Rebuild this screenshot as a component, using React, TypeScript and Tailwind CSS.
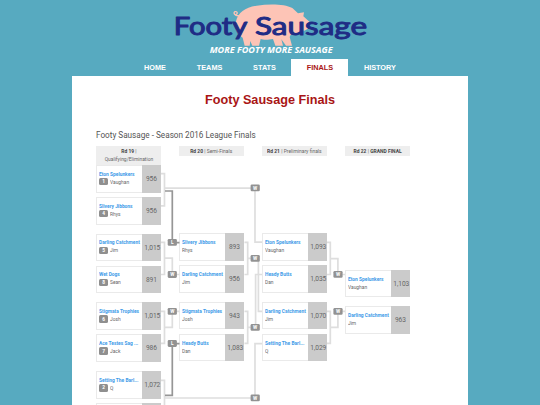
import { clsx } from 'clsx';

type Team = {
  name: string;
  owner: string;
  score: string;
  seed?: number;
};

type Round = {
  label: string;
  title: string;
  strong?: boolean;
  offset: string;
  pairs: (Team | null)[][];
};

const NAV = ['HOME', 'TEAMS', 'STATS', 'FINALS', 'HISTORY'];

const ROUNDS: Round[] = [
  {
    label: 'Rd 19',
    title: 'Qualifying/Elimination',
    offset: 'pt-0',
    pairs: [
      [
        { name: 'Eton Spelunkers', owner: 'Vaughan', score: '956', seed: 1 },
        { name: 'Slivery Jibbons', owner: 'Rhys', score: '956', seed: 4 },
      ],
      [
        { name: 'Darling Catchment', owner: 'Jim', score: '1,015', seed: 5 },
        { name: 'Wet Dogs', owner: 'Sean', score: '891', seed: 8 },
      ],
      [
        { name: 'Stigmata Trophies', owner: 'Josh', score: '1,015', seed: 6 },
        { name: 'Ace Testes Sag ...', owner: 'Jack', score: '986', seed: 7 },
      ],
      [{ name: 'Setting The Barl...', owner: 'Q', score: '1,072', seed: 2 }, null],
    ],
  },
  {
    label: 'Rd 20',
    title: 'Semi-Finals',
    offset: 'pt-[76.8px]',
    pairs: [
      [
        { name: 'Slivery Jibbons', owner: 'Rhys', score: '893' },
        { name: 'Darling Catchment', owner: 'Jim', score: '956' },
      ],
      [
        { name: 'Stigmata Trophies', owner: 'Josh', score: '943' },
        { name: 'Heady Butts', owner: 'Dan', score: '1,083' },
      ],
    ],
  },
  {
    label: 'Rd 21',
    title: 'Preliminary finals',
    offset: 'pt-[76.8px]',
    pairs: [
      [
        { name: 'Eton Spelunkers', owner: 'Vaughan', score: '1,093' },
        { name: 'Heady Butts', owner: 'Dan', score: '1,035' },
      ],
      [
        { name: 'Darling Catchment', owner: 'Jim', score: '1,070' },
        { name: 'Setting The Barl...', owner: 'Q', score: '1,029' },
      ],
    ],
  },
  {
    label: 'Rd 22',
    title: 'GRAND FINAL',
    strong: true,
    offset: 'pt-[113.4px]',
    pairs: [
      [{ name: 'Eton Spelunkers', owner: 'Vaughan', score: '1,103' }],
      [{ name: 'Darling Catchment', owner: 'Jim', score: '963' }],
    ],
  },
];

// Winner paths are light, loser paths dark
const WIN_LINES = [
  'M161 173.6H164.5V205.8H161',
  'M164.5 188.2H251',
  'M161 242.4H164.5V274.5H161',
  'M164.5 258.2H172.3V274.5H179.5',
  'M161 311.3H164.5V343.4H161',
  'M164.5 327.4H172.3V311.3H179.5',
  'M161 380.4H164.5V412H161',
  'M164.5 398H251',
  'M244.5 242.4H247.7V274.5H244.5',
  'M247.7 258.4H258.4V311.3H262',
  'M255 188V242.2H262',
  'M244.5 311.3H247.7V343.4H244.5',
  'M247.7 327.4H255.6V274.5H262',
  'M255 398V343.6H262',
  'M327 242.4H330.3V274.5H327',
  'M330.3 258.6H337.9V274.5H345',
  'M327 311.3H330.3V343.4H327',
  'M330.3 327.4H337.9V311.3H345',
];
const LOSE_LINES = ['M165 191H172.3V242.7H179.5', 'M165 395.4H172.3V343.6H179.5'];

const BADGES: [number, number, string][] = [
  [172.3, 242.4, 'L'],
  [172.3, 274.5, 'W'],
  [172.3, 311.3, 'W'],
  [172.3, 343.5, 'L'],
  [255.2, 187.8, 'W'],
  [255.2, 258.4, 'W'],
  [255.2, 327.4, 'W'],
  [255.2, 397.8, 'W'],
  [338, 274.4, 'W'],
  [338, 311.3, 'W'],
];

function Logo() {
  return (
    <svg className="h-[60px] w-[220px]" viewBox="0 0 660 180">
      <g fill="#fdc4b6">
        <path d="M228 64C234 38 256 22 290 17C330 11 374 12 397 24L414 40L432 37L430 49L440 58L449 66L446 84C434 94 414 99 392 104L389 111L396 137H378L364 118L369 137H346L339 117C320 121 308 119 302 117L297 137H277L271 123L269 137H254L248 113C231 102 224 84 228 64Z" />
        <path d="M237 47C225 49 218 38 225 35C232 33 235 42 226 45" fill="none" stroke="#fdc4b6" strokeWidth="4" />
      </g>
      <g
        className="fill-[#1f2c85] stroke-[#1f2c85] font-['Lato'] text-[73px]"
        strokeWidth="3"
        strokeLinejoin="round"
      >
        <text x="41" y="106" textLength="221" lengthAdjust="spacingAndGlyphs">
          Footy
        </text>
        <text x="285" y="106" textLength="336" lengthAdjust="spacingAndGlyphs">
          Sausage
        </text>
      </g>
      <text
        x="149"
        y="159"
        textLength="369"
        lengthAdjust="spacingAndGlyphs"
        className="fill-white font-['Open_Sans'] text-[25px] font-bold italic"
      >
        MORE FOOTY MORE SAUSAGE
      </text>
    </svg>
  );
}

function TeamBox({ team }: { team: Team | null }) {
  return (
    <div className="flex h-[27.5px] w-[64.6px] shrink-0 border border-[#eaeaea] bg-white">
      <div className="w-[45px] shrink-0 pt-[3.8px] pl-[1.8px] whitespace-nowrap">
        {team && (
          <>
            <div className="h-[8px] origin-left scale-x-[0.84] text-[5.8px] leading-[8px] font-bold text-[#419be8]">
              {team.name}
            </div>
            <div className="flex h-[8px] items-center gap-[2px]">
              {team.seed && (
                <span className="flex h-[7.4px] w-[9px] items-center justify-center rounded-[1.5px] bg-[#8f8f8f] text-[4.8px] font-bold text-white">
                  {team.seed}
                </span>
              )}
              <span className="origin-left scale-x-[0.84] text-[5.8px] leading-[8px] text-[#666]">{team.owner}</span>
            </div>
          </>
        )}
      </div>
      <div className="-my-px -mr-px flex w-[18.6px] shrink-0 items-center justify-center bg-[#cbcbcb] text-[7.7px] text-[#666]">
        {team && (
          <span className={clsx('scale-x-[0.86]', team.score.length > 3 && 'pl-[2px]')}>{team.score}</span>
        )}
      </div>
    </div>
  );
}

function RoundColumn({ round }: { round: Round }) {
  const wraps = round.title.length > 20;
  return (
    <div className="w-[64.6px] shrink-0">
      <div
        className={clsx(
          'flex justify-center bg-[#eee] text-center text-[5.7px] whitespace-nowrap text-[#666]',
          wraps ? 'h-[19px] pt-[1px] leading-[8px]' : 'h-[10.4px] leading-[10.4px]',
        )}
      >
        <div className="scale-x-[0.87]">
          <b className="text-[#444]">{round.label}</b> |{wraps ? <br /> : ' '}
          <span className={clsx(round.strong && 'font-bold text-[#444]')}>{round.title}</span>
        </div>
      </div>
      <div className={clsx('flex flex-col gap-[9.2px]', round.offset)}>
        {round.pairs.map((pair, i) => (
          <div key={i} className="flex flex-col gap-[4.5px]">
            {pair.map((team, j) => (
              <TeamBox key={j} team={team} />
            ))}
          </div>
        ))}
      </div>
    </div>
  );
}

function Connectors() {
  return (
    <svg className="absolute top-0 left-0 h-[259px] w-[314px]" viewBox="96 146 314 259">
      <path d={WIN_LINES.join('')} fill="none" stroke="#dedede" strokeWidth="1.7" />
      <path d={LOSE_LINES.join('')} fill="none" stroke="#969696" strokeWidth="1.7" />
      {BADGES.map(([x, y, label]) => (
        <g key={`${x}-${y}`}>
          <rect x={x - 4.6} y={y - 3.4} width="9.2" height="6.8" rx="1.3" fill="#929292" />
          <text x={x} y={y + 1.8} textAnchor="middle" className="fill-white text-[4.8px] font-bold">
            {label}
          </text>
        </g>
      ))}
    </svg>
  );
}

export default function App() {
  return (
    <div className="flex h-[405px] w-[540px] flex-col overflow-hidden bg-[#57aac0] font-['Liberation_Sans',sans-serif]">
      <header className="flex h-[59px] shrink-0 justify-center">
        <Logo />
      </header>
      <nav className="flex h-[17px] shrink-0 justify-center text-[7.3px] font-bold text-white">
        {NAV.map((item) => (
          <a
            key={item}
            href="#"
            className={clsx(
              'flex items-center px-[15.4px] pt-px',
              item === 'FINALS' && 'bg-white text-[#a91515]',
            )}
          >
            {item}
          </a>
        ))}
      </nav>
      <main className="mx-auto w-[396px] grow bg-white">
        <h1 className="pt-[16px] text-center text-[12.65px] leading-[17px] font-bold text-[#a91515]">
          Footy Sausage Finals
        </h1>
        <section className="pt-[19px] pl-[24.3px] font-['Roboto',sans-serif]">
          <h2 className="h-[18px] origin-left scale-x-[0.86] text-[9.5px] leading-[13px] whitespace-nowrap text-[#555]">
            Footy Sausage - Season 2016 League Finals
          </h2>
          <div className="relative flex gap-[18.3px]">
            {ROUNDS.map((round) => (
              <RoundColumn key={round.label} round={round} />
            ))}
            <Connectors />
          </div>
        </section>
      </main>
    </div>
  );
}
